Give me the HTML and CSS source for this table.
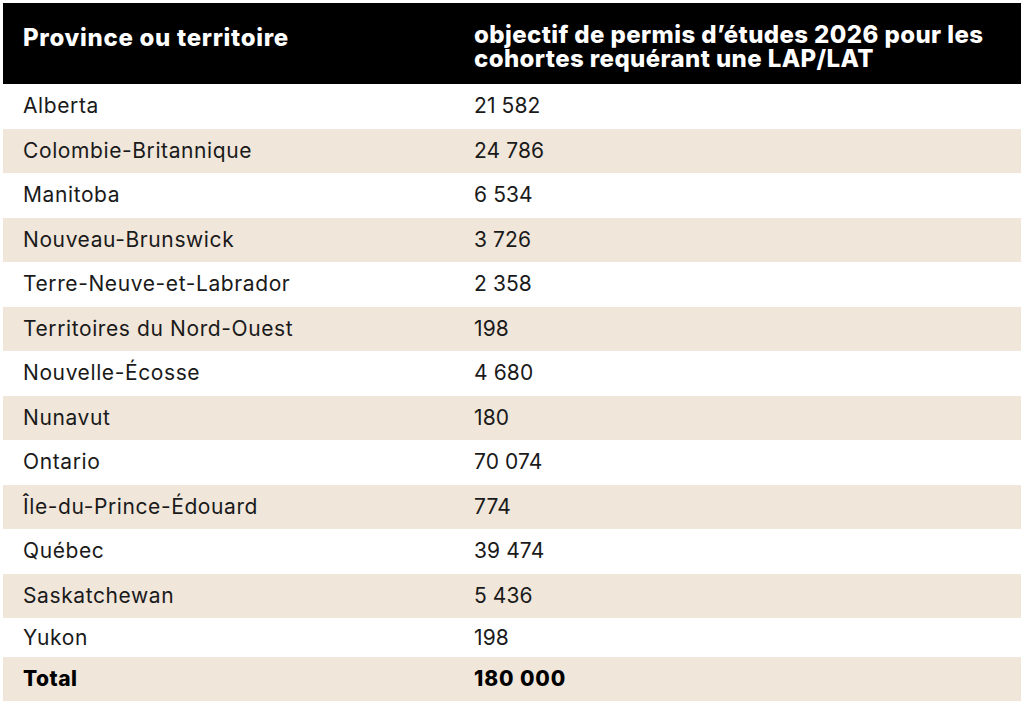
FILE: index.html
```html
<!DOCTYPE html>
<html lang="fr">
<head>
<meta charset="utf-8">
<title>Permis d'études 2026</title>
<link rel="stylesheet" href="styles.css">
</head>
<body>
<table class="data">
  <thead>
    <tr>
      <th class="col-prov">Province ou territoire</th>
      <th class="col-num">objectif de permis d’études 2026 pour les cohortes requérant une LAP/LAT</th>
    </tr>
  </thead>
  <tbody>
    <tr><td>Alberta</td><td class="num">21 582</td></tr>
    <tr class="alt"><td>Colombie-Britannique</td><td class="num">24 786</td></tr>
    <tr><td>Manitoba</td><td class="num">6 534</td></tr>
    <tr class="alt"><td>Nouveau-Brunswick</td><td class="num">3 726</td></tr>
    <tr><td>Terre-Neuve-et-Labrador</td><td class="num">2 358</td></tr>
    <tr class="alt"><td>Territoires du Nord-Ouest</td><td class="num">198</td></tr>
    <tr><td>Nouvelle-Écosse</td><td class="num">4 680</td></tr>
    <tr class="alt"><td>Nunavut</td><td class="num">180</td></tr>
    <tr><td>Ontario</td><td class="num">70 074</td></tr>
    <tr class="alt"><td>Île-du-Prince-Édouard</td><td class="num">774</td></tr>
    <tr><td>Québec</td><td class="num">39 474</td></tr>
    <tr class="alt"><td>Saskatchewan</td><td class="num">5 436</td></tr>
    <tr class="short"><td>Yukon</td><td class="num">198</td></tr>
    <tr class="alt total"><td>Total</td><td class="num">180 000</td></tr>
  </tbody>
</table>
</body>
</html>
```
FILE: styles.css
```css
html, body {
  margin: 0;
  padding: 0;
  background: #ffffff;
}
body {
  padding: 3px 3px 0 3px;
  font-family: Inter, "Liberation Sans", sans-serif;
  color: #1a1a1a;
}
.data {
  width: 1018px;
  border-collapse: collapse;
  table-layout: fixed;
}
.data th {
  background: #000000;
  color: #ffffff;
  text-align: left;
  vertical-align: top;
  font-weight: 800;
  font-size: 24px;
  line-height: 24px;
  letter-spacing: 0.4px;
  padding: 20px 20px 12px 20px;
  height: 81px;
  box-sizing: border-box;
}
.data th.col-prov {
  width: 451px;
  padding-top: 23px;
  letter-spacing: 0.7px;
}
.data td {
  height: 44.5px;
  box-sizing: border-box;
  padding: 0 20px;
  font-size: 21px;
  font-weight: 400;
  letter-spacing: 0.6px;
  vertical-align: middle;
  line-height: 24px;
}
.data td.num {
  letter-spacing: 0.1px;
}
.data tr.short td {
  height: 39px;
}
.data tr.alt td {
  background: #f0e6da;
}
.data tr.total td {
  height: 44px;
  font-weight: 800;
  color: #000000;
  letter-spacing: 0.5px;
}
.data tr.total td.num {
  letter-spacing: 0.9px;
}
```
